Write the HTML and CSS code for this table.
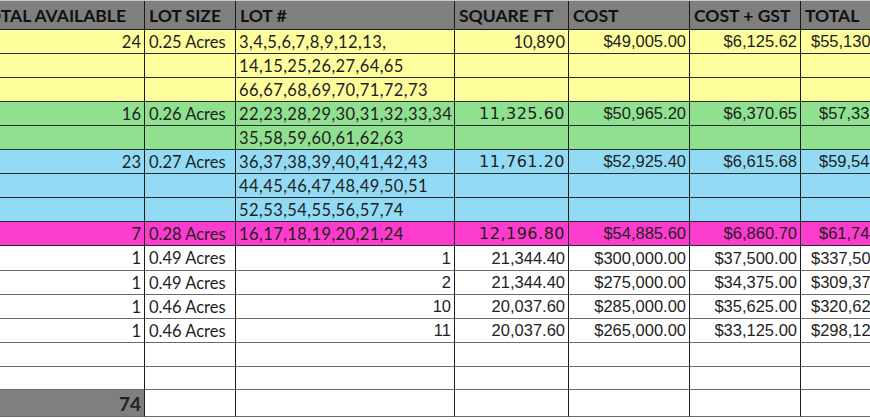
FILE: index.html
```html
<!DOCTYPE html>
<html>
<head>
<meta charset="utf-8">
<link rel="stylesheet" href="styles.css">
</head>
<body>
<div class="sheet">
  <div class="row head">
    <div class="c">TOTAL AVAILABLE</div>
    <div class="c">LOT SIZE</div>
    <div class="c">LOT #</div>
    <div class="c">SQUARE FT</div>
    <div class="c">COST</div>
    <div class="c">COST + GST</div>
    <div class="c">TOTAL</div>
  </div>

  <div class="row yellow">
    <div class="c num">24</div>
    <div class="c">0.25 Acres</div>
    <div class="c lots">3,4,5,6,7,8,9,12,13,</div>
    <div class="c num">10,890</div>
    <div class="c num money">$49,005.00</div>
    <div class="c num money">$6,125.62</div>
    <div class="c money tot-a">$55,130.62</div>
  </div>
  <div class="row yellow">
    <div class="c"></div><div class="c"></div>
    <div class="c lots">14,15,25,26,27,64,65</div>
    <div class="c"></div><div class="c"></div><div class="c"></div><div class="c"></div>
  </div>
  <div class="row yellow">
    <div class="c"></div><div class="c"></div>
    <div class="c lots">66,67,68,69,70,71,72,73</div>
    <div class="c"></div><div class="c"></div><div class="c"></div><div class="c"></div>
  </div>

  <div class="row green">
    <div class="c num">16</div>
    <div class="c">0.26 Acres</div>
    <div class="c lots">22,23,28,29,30,31,32,33,34</div>
    <div class="c num sqft">11,325.60</div>
    <div class="c num money">$50,965.20</div>
    <div class="c num money">$6,370.65</div>
    <div class="c money tot-b">$57,335.85</div>
  </div>
  <div class="row green">
    <div class="c"></div><div class="c"></div>
    <div class="c lots">35,58,59,60,61,62,63</div>
    <div class="c"></div><div class="c"></div><div class="c"></div><div class="c"></div>
  </div>

  <div class="row blue">
    <div class="c num">23</div>
    <div class="c">0.27 Acres</div>
    <div class="c lots">36,37,38,39,40,41,42,43</div>
    <div class="c num sqft">11,761.20</div>
    <div class="c num money">$52,925.40</div>
    <div class="c num money">$6,615.68</div>
    <div class="c money tot-b">$59,541.08</div>
  </div>
  <div class="row blue">
    <div class="c"></div><div class="c"></div>
    <div class="c lots">44,45,46,47,48,49,50,51</div>
    <div class="c"></div><div class="c"></div><div class="c"></div><div class="c"></div>
  </div>
  <div class="row blue">
    <div class="c"></div><div class="c"></div>
    <div class="c lots">52,53,54,55,56,57,74</div>
    <div class="c"></div><div class="c"></div><div class="c"></div><div class="c"></div>
  </div>

  <div class="row pink">
    <div class="c num">7</div>
    <div class="c">0.28 Acres</div>
    <div class="c lots">16,17,18,19,20,21,24</div>
    <div class="c num sqft">12,196.80</div>
    <div class="c num money">$54,885.60</div>
    <div class="c num money">$6,860.70</div>
    <div class="c money tot-b">$61,746.30</div>
  </div>

  <div class="row white first">
    <div class="c num">1</div>
    <div class="c">0.49 Acres</div>
    <div class="c num money">1</div>
    <div class="c num money">21,344.40</div>
    <div class="c num money">$300,000.00</div>
    <div class="c num money">$37,500.00</div>
    <div class="c money tot-a">$337,500.00</div>
  </div>
  <div class="row white">
    <div class="c num">1</div>
    <div class="c">0.49 Acres</div>
    <div class="c num money">2</div>
    <div class="c num money">21,344.40</div>
    <div class="c num money">$275,000.00</div>
    <div class="c num money">$34,375.00</div>
    <div class="c money tot-a">$309,375.00</div>
  </div>
  <div class="row white">
    <div class="c num">1</div>
    <div class="c">0.46 Acres</div>
    <div class="c num money">10</div>
    <div class="c num money">20,037.60</div>
    <div class="c num money">$285,000.00</div>
    <div class="c num money">$35,625.00</div>
    <div class="c money tot-a">$320,625.00</div>
  </div>
  <div class="row white">
    <div class="c num">1</div>
    <div class="c">0.46 Acres</div>
    <div class="c num money">11</div>
    <div class="c num money">20,037.60</div>
    <div class="c num money">$265,000.00</div>
    <div class="c num money">$33,125.00</div>
    <div class="c money tot-a">$298,125.00</div>
  </div>
  <div class="row white">
    <div class="c"></div><div class="c"></div><div class="c"></div><div class="c"></div><div class="c"></div><div class="c"></div><div class="c"></div>
  </div>
  <div class="row white short">
    <div class="c"></div><div class="c"></div><div class="c"></div><div class="c"></div><div class="c"></div><div class="c"></div><div class="c"></div>
  </div>
  <div class="row white total">
    <div class="c num grand">74</div>
    <div class="c"></div><div class="c"></div><div class="c"></div><div class="c"></div><div class="c"></div><div class="c"></div>
  </div>
</div>
</body>
</html>
```

FILE: styles.css
```css
html, body {
  margin: 0;
  padding: 0;
  background: #ffffff;
  overflow: hidden;
}

.sheet {
  margin-left: -27px;
  width: 960px;
  border-top: 1px solid #c9c9c9;
  font-family: Lato, "Liberation Sans", sans-serif;
  font-size: 16.5px;
  color: #1e1e1e;
}

.row {
  display: grid;
  grid-template-columns: 172px 91px 219px 114px 121px 111px 132px;
  height: 24px;
}

.row.first { height: 25px; }
.row.short { height: 23px; }
.row.total { height: 27px; }

.c {
  box-sizing: border-box;
  border-right: 1px solid #1a1a1a;
  border-bottom: 1px solid #2a2a2a;
  padding: 0 3px 0 4px;
  display: flex;
  align-items: center;
  white-space: nowrap;
  overflow: hidden;
}

.head {
  height: 29px;
  background: #7f7f7f;
}

.head .c {
  font-weight: 700;
  font-size: 17.5px;
  color: #111;
  padding-left: 4px;
  padding-top: 1px;
  border-bottom-color: #1a1a1a;
}

.num { justify-content: flex-end; }

.lots {
  padding-left: 3px;
  letter-spacing: 0.42px;
}

.money {
  font-family: "Liberation Sans", Arial, sans-serif;
  font-size: 16.5px;
}

.sqft {
  font-family: "DejaVu Sans", sans-serif;
  font-size: 16px;
  letter-spacing: 0.5px;
  padding-right: 3px;
}

.tot-a { padding-left: 10px; }
.tot-b { padding-left: 18px; }

.yellow { background: #fdfd9c; }
.green { background: #8fe08f; }
.blue { background: #93dbf5; }
.pink { background: #fc3ccf; }
.white { background: #ffffff; }

.white .c { border-bottom-color: #6a6a6a; }

.grand {
  background: #7f7f7f;
  font-weight: 700;
  font-size: 19px;
  color: #222;
}
```
